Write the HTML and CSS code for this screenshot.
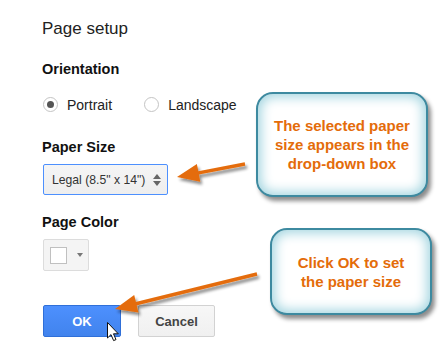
FILE: index.html
```html
<!DOCTYPE html>
<html>
  <head>
    <title>Page setup</title>
    <link rel="stylesheet" href="styles.css">
  </head>
  <body>
    <div id="main">
      <div id="dialog">
        <h1>Page setup</h1>

        <div class="label first">Orientation</div>
        <div class="radio_row">
          <div class="radio checked"></div><span class="radio_text">Portrait</span>
          <div class="radio second"></div><span class="radio_text">Landscape</span>
        </div>

        <div class="label">Paper Size</div>
        <div class="select">
          <span>Legal (8.5" x 14")</span>
          <div class="spin"><div class="up"></div><div class="down"></div></div>
        </div>

        <div class="label near">Page Color</div>
        <div class="color_btn">
          <div class="swatch"></div>
          <div class="caret"></div>
        </div>

        <div class="buttons">
          <div class="btn ok">OK</div>
          <div class="btn cancel">Cancel</div>
        </div>
      </div>

      <!-- annotation overlay -->
      <svg id="arrows" width="443" height="357" viewBox="0 0 443 357">
        <defs>
          <filter id="shade" x="-20%" y="-40%" width="140%" height="180%">
            <feGaussianBlur in="SourceAlpha" stdDeviation="1.6"/>
            <feOffset dx="2" dy="3" result="off"/>
            <feComponentTransfer><feFuncA type="linear" slope="0.45"/></feComponentTransfer>
            <feMerge><feMergeNode/><feMergeNode in="SourceGraphic"/></feMerge>
          </filter>
        </defs>
        <g filter="url(#shade)" fill="#e46c0a" stroke="#e46c0a">
          <line x1="245" y1="164" x2="196" y2="173.4" stroke-width="3.5"/>
          <polygon points="177,177 200.3,181.7 196.9,164.1" stroke="none"/>
          <line x1="257" y1="274" x2="134" y2="304.3" stroke-width="3.5"/>
          <polygon points="115,309 138.5,312.4 134.2,294.9" stroke="none"/>
        </g>
        <path class="cursor" d="M107.5 322.5 L107.5 338 L111 334.6 L113.6 340.6 L116 339.6 L113.5 333.8 L118.3 333.8 Z"/>
      </svg>

      <div class="callout one">The selected paper<br>size appears in the<br>drop-down box</div>
      <div class="callout two">Click OK to set<br>the paper size</div>
    </div>
  </body>
</html>
```

FILE: styles.css
```css
body {
  margin: 0;
  padding: 0;
  background-color: #ffffff;
  font-family: Arial, "Liberation Sans", sans-serif;
}
#main {
  position: relative;
  width: 443px;
  height: 357px;
  overflow: hidden;
}
#dialog {
  display: flex;
  flex-direction: column;
  align-items: flex-start;
  padding: 19px 0 0 42px;
}
h1 {
  margin: 0;
  font-size: 17px;
  line-height: 20px;
  font-weight: normal;
  color: #222222;
}
.label {
  margin-top: 26px;
  font-size: 14.5px;
  line-height: 16px;
  font-weight: bold;
  color: #111111;
}
.label.first {
  margin-top: 22px;
}
.label.near {
  margin-top: 19px;
}
.radio_row {
  display: flex;
  align-items: center;
  margin: 19px 0 0 1px;
  height: 17px;
}
.radio {
  box-sizing: border-box;
  width: 15px;
  height: 15px;
  border: 1px solid #c4c4c4;
  border-radius: 50%;
  background-color: #ffffff;
  position: relative;
}
.radio.checked::after {
  content: "";
  position: absolute;
  left: 3px;
  top: 3px;
  width: 7px;
  height: 7px;
  border-radius: 50%;
  background-color: #555555;
}
.radio.second {
  margin-left: 32px;
}
.radio_text {
  margin-left: 9px;
  font-size: 14px;
  color: #222222;
}
.select {
  display: flex;
  align-items: center;
  justify-content: space-between;
  box-sizing: border-box;
  width: 125px;
  height: 31px;
  margin: 9px 0 0 1px;
  padding: 0 6px 0 8px;
  border: 1px solid #4d90fe;
  border-radius: 2px;
  background: linear-gradient(#f5f5f5, #eeeeee);
  font-size: 12.2px;
  color: #333333;
}
.spin {
  display: flex;
  flex-direction: column;
  gap: 2px;
}
.up, .down {
  width: 0;
  height: 0;
  border-left: 4px solid transparent;
  border-right: 4px solid transparent;
}
.up {
  border-bottom: 5px solid #666666;
}
.down {
  border-top: 5px solid #666666;
}
.color_btn {
  display: flex;
  align-items: center;
  box-sizing: border-box;
  width: 46px;
  height: 32px;
  margin: 9px 0 0 1px;
  padding-left: 6px;
  border: 1px solid #dcdcdc;
  border-radius: 2px;
  background-color: #f4f4f4;
}
.swatch {
  box-sizing: border-box;
  width: 17px;
  height: 17px;
  border: 1px solid #c0c0c0;
  background-color: #ffffff;
}
.caret {
  margin-left: 10px;
  width: 0;
  height: 0;
  border-left: 3.5px solid transparent;
  border-right: 3.5px solid transparent;
  border-top: 4px solid #777777;
}
.buttons {
  display: flex;
  margin: 34px 0 0 1px;
  gap: 17px;
}
.btn {
  display: flex;
  align-items: center;
  justify-content: center;
  box-sizing: border-box;
  height: 32px;
  border-radius: 2px;
  font-size: 13px;
  font-weight: bold;
}
.ok {
  width: 78px;
  border: 1px solid #2f6fd8;
  background: linear-gradient(#4d90fe, #4183ed);
  color: #ffffff;
}
.cancel {
  width: 77px;
  border: 1px solid #d2d2d2;
  background: linear-gradient(#f7f7f7, #f0f0f0);
  color: #444444;
}
#arrows {
  position: absolute;
  left: 0;
  top: 0;
}
.cursor {
  fill: #ffffff;
  stroke: #111111;
  stroke-width: 1;
  stroke-linejoin: miter;
}
.callout {
  position: absolute;
  display: flex;
  align-items: center;
  justify-content: center;
  box-sizing: border-box;
  border: 2px solid #3d8aa0;
  border-radius: 17px;
  background-color: #ffffff;
  box-shadow: inset 0 0 12px 3px #a3d5e0, 3px 4px 4px rgba(0, 0, 0, 0.45);
  color: #e46c0a;
  font-size: 15px;
  line-height: 19px;
  font-weight: bold;
  text-align: center;
}
.callout.one {
  left: 256px;
  top: 92px;
  width: 172px;
  height: 105px;
}
.callout.two {
  left: 270px;
  top: 228px;
  width: 162px;
  height: 87px;
}
```
